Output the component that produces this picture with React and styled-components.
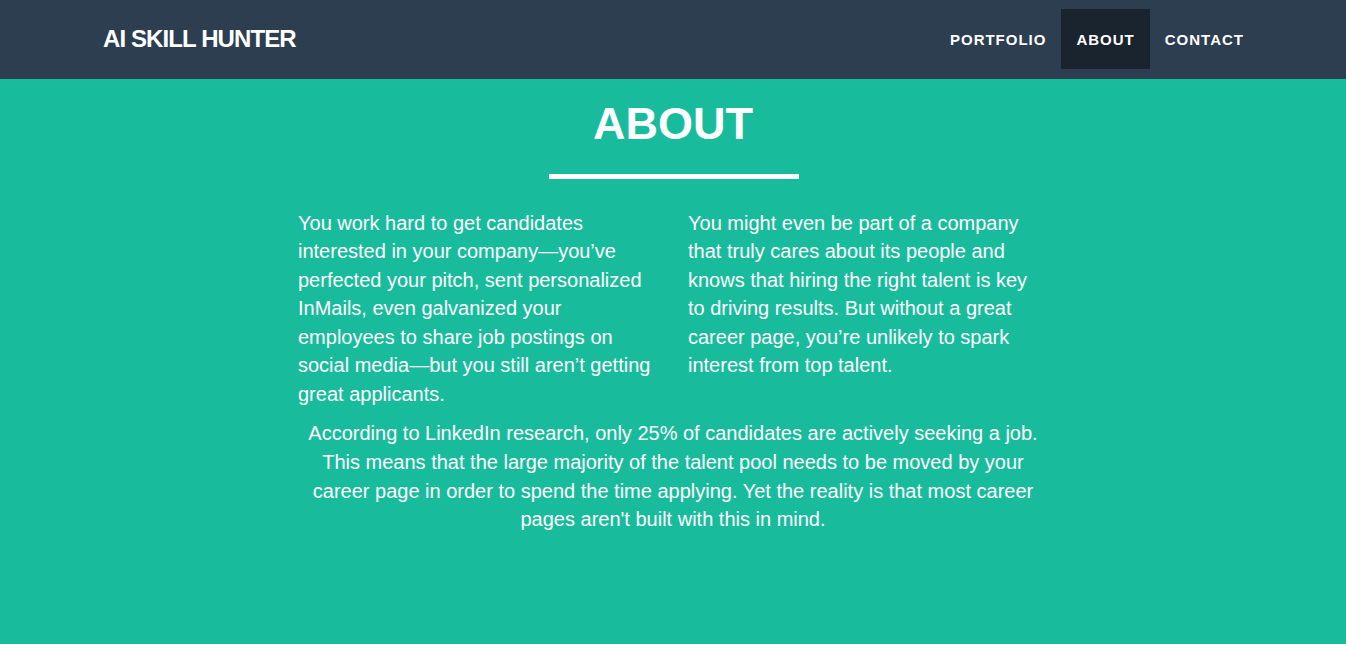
import React from "react"
import styled, { createGlobalStyle } from "styled-components"

const GlobalStyle = createGlobalStyle`
  body {
    margin: 0;
    background: #fff;
    font-family: "Liberation Sans", Arial, sans-serif;
    color: #fff;
  }
  * { box-sizing: border-box; }
`

const links = ["Portfolio", "About", "Contact"]

const App = () => {
  return (
    <>
      <GlobalStyle />
      <Navbar>
        <Container>
          <Brand>AI Skill Hunter</Brand>
          <NavList>
            {links.map((l) => (
              <NavItem key={l} $active={l === "About"}>
                {l}
              </NavItem>
            ))}
          </NavList>
        </Container>
      </Navbar>
      <Section>
        <Title>About</Title>
        <Rule />
        <Columns>
          <Text>
            You work hard to get candidates interested in your company—you’ve
            perfected your pitch, sent personalized InMails, even galvanized your
            employees to share job postings on social media—but you still aren’t
            getting great applicants.
          </Text>
          <Text>
            You might even be part of a company that truly cares about its people
            and knows that hiring the right talent is key to driving results. But
            without a great career page, you’re unlikely to spark interest from
            top talent.
          </Text>
          <Text $wide>
            According to LinkedIn research, only 25% of candidates are actively
            seeking a job. This means that the large majority of the talent pool
            needs to be moved by your career page in order to spend the time
            applying. Yet the reality is that most career pages aren't built with
            this in mind.
          </Text>
        </Columns>
      </Section>
    </>
  )
}

const Navbar = styled.nav`
  background: #2c3e50;
  height: 79px;
`

const Container = styled.div`
  width: 1170px;
  margin: 0 auto;
  padding: 0 15px;
  height: 100%;
  display: flex;
  align-items: center;
  justify-content: space-between;
`

const Brand = styled.a`
  font-size: 24px;
  font-weight: 700;
  letter-spacing: -0.9px;
  text-transform: uppercase;
  color: #fff;
  margin-top: -1px;
`

const NavList = styled.ul`
  list-style: none;
  display: flex;
  margin: -1px -16px 0 0;
  padding: 0;
`

const NavItem = styled.li`
  height: 60px;
  padding: 0 15px;
  display: flex;
  align-items: center;
  font-size: 15px;
  font-weight: 700;
  letter-spacing: 1px;
  text-transform: uppercase;
  color: #fff;
  background: ${(p) => (p.$active ? "#1a242f" : "transparent")};
`

const Section = styled.section`
  background: #18bc9c;
  padding: 20px 0 100px;
  text-align: center;
`

const Title = styled.h2`
  margin: 0;
  font-size: 45px;
  line-height: 1.1;
  font-weight: 700;
  text-transform: uppercase;
`

const Rule = styled.div`
  width: 250px;
  height: 5px;
  background: #fff;
  margin: 25px auto 30px;
  transform: translateX(1px);
`

const Columns = styled.div`
  width: 780px;
  margin: 0 auto;
  display: grid;
  grid-template-columns: 1fr 1fr;
`

const Text = styled.p`
  margin: 0 0 ${(p) => (p.$wide ? "10px" : "11px")};
  padding: 0 15px;
  font-size: 20px;
  line-height: 1.42857;
  text-align: ${(p) => (p.$wide ? "center" : "left")};
  grid-column: ${(p) => (p.$wide ? "1 / -1" : "auto")};
`

export default App
